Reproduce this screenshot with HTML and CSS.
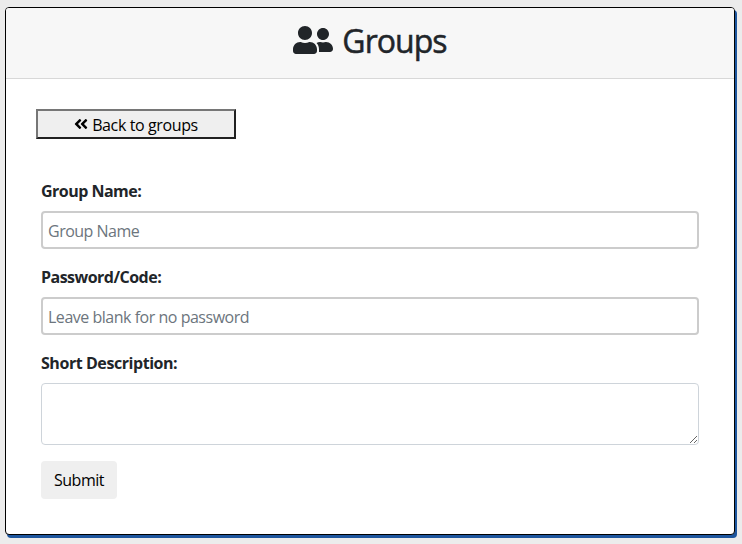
FILE: index.html
```html
<!DOCTYPE html>
<html lang="en">
<head>
<meta charset="utf-8">
<title>Groups</title>
<link rel="stylesheet" href="styles.css">
</head>
<body>
<main class="card">
  <header class="card-header">
    <svg class="icon-users" viewBox="0 0 640 512" aria-hidden="true"><path d="M192 256c61.900 0 112-50.100 112-112S253.900 32 192 32 80 82.100 80 144s50.100 112 112 112zm76.800 32h-8.300c-20.800 10-43.900 16-68.500 16s-47.600-6-68.500-16h-8.300C51.600 288 0 339.600 0 403.200V432c0 26.500 21.500 48 48 48h288c26.500 0 48-21.500 48-48v-28.800c0-63.600-51.600-115.200-115.200-115.200zM480 256c53 0 96-43 96-96s-43-96-96-96-96 43-96 96 43 96 96 96zm48 32h-3.800c-13.900 4.800-28.600 8-44.200 8s-30.300-3.200-44.200-8H432c-20.400 0-39.200 5.900-55.700 15.400 24.400 26.300 39.700 61.200 39.700 99.800v38.400c0 2.200-.5 4.300-.6 6.400H592c26.500 0 48-21.500 48-48 0-61.900-50.100-112-112-112z"/></svg>
    <h1 class="title">Groups</h1>
  </header>
  <div class="card-body">
    <button class="back" type="button">
      <svg class="icon-back" viewBox="0 0 448 512" aria-hidden="true"><path d="M223.700 239l136-136c9.400-9.400 24.600-9.400 33.900 0l22.600 22.600c9.400 9.400 9.400 24.600 0 33.900L319.900 256l96.400 96.400c9.400 9.400 9.400 24.600 0 33.900L393.700 409c-9.400 9.400-24.600 9.400-33.900 0l-136-136c-9.500-9.400-9.500-24.600-.1-34zm-192 34l136 136c9.400 9.400 24.600 9.400 33.900 0l22.600-22.600c9.400-9.400 9.400-24.600 0-33.900L127.900 256l96.400-96.400c9.400-9.400 9.400-24.600 0-33.900L201.700 103c-9.400-9.400-24.600-9.400-33.900 0l-136 136c-9.500 9.400-9.500 24.600-.1 34z"/></svg>
      <span class="back-text">Back to groups</span>
    </button>
    <form class="form">
      <div class="field">
        <label class="label label-name" for="name">Group Name:</label>
        <input class="input input-name" id="name" type="text" placeholder="Group Name">
      </div>
      <div class="field">
        <label class="label label-code" for="code">Password/Code:</label>
        <input class="input input-code" id="code" type="text" placeholder="Leave blank for no password">
      </div>
      <div class="field">
        <label class="label label-desc" for="desc">Short Description:</label>
        <textarea class="textarea" id="desc" rows="2"></textarea>
      </div>
      <button class="submit" type="button">Submit</button>
    </form>
  </div>
</main>
</body>
</html>
```
FILE: styles.css
```css
* { box-sizing: border-box; }
body {
  margin: 0;
  padding: 7px 7px 9px 5px;
  height: 544px;
  overflow: hidden;
  background: #ececec;
  color: #212529;
  font: 16px/24px "Open Sans", "Noto Sans", sans-serif;
}
.card {
  height: 528px;
  border: 1px solid #000;
  border-radius: 4px;
  background: #fff;
  box-shadow: 2px 3px 0 #1d569e;
}
.card-header {
  display: flex;
  justify-content: center;
  height: 71px;
  padding-top: 14px;
  border-bottom: 1px solid #d8d8d8;
  border-radius: 3px 3px 0 0;
  background: #f7f7f7;
}
.icon-users { width: 40px; height: 32px; margin: 2px 9px 0 0; fill: #212529; }
.title {
  margin: 0;
  font-size: 32px;
  line-height: 38px;
  font-weight: 500;
  letter-spacing: -0.95px;
  -webkit-text-stroke: 0.5px #212529;
}
.card-body { padding: 30px; }
.back {
  display: flex;
  align-items: center;
  justify-content: center;
  gap: 4px;
  width: 200px;
  height: 30px;
  padding: 0;
  border: 2px solid;
  border-color: #767676 #212121 #212121 #767676;
  background: #efefef;
  color: #000;
  font: inherit;
}
.icon-back { width: 14px; height: 16px; }
.back-text { padding-top: 1px; letter-spacing: -0.38px; }
.form { padding: 40px 5px 0; }
.field { margin-bottom: 16px; }
.label { display: block; width: max-content; height: 24px; margin-bottom: 8px; font-weight: 700; }
.label-name { letter-spacing: -0.52px; }
.label-code { letter-spacing: -0.52px; }
.label-desc { letter-spacing: -0.44px; }
.input {
  display: block;
  width: 100%;
  height: 38px;
  padding: 4px 5px 2px;
  border: 2px solid #ccc;
  border-radius: 4px;
  background: #fff;
  font: inherit;
}
.input-name { letter-spacing: -0.5px; }
.input-code { letter-spacing: -0.48px; }
.input::placeholder { color: #6c757d; opacity: 1; }
.textarea {
  display: block;
  width: 100%;
  height: 62px;
  border: 1px solid #ced4da;
  border-radius: 4px;
  background: #fff;
  font: inherit;
}
.submit {
  display: block;
  width: 76px;
  height: 38px;
  padding: 0;
  border: 0;
  border-radius: 4px;
  background: #efefef;
  color: #000;
  font: inherit;
  letter-spacing: -0.45px;
}
```
